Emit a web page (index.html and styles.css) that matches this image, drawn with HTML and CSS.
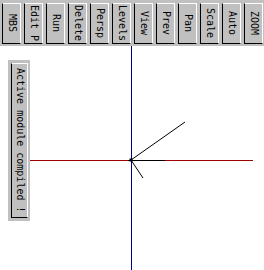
FILE: index.html
```html
<!DOCTYPE html>
<html>
<head>
<meta charset="utf-8">
<link rel="stylesheet" href="styles.css">
</head>
<body>
<div class="app">
  <div class="toolbar">
    <div class="btn"><span class="lbl">MBS</span></div>
    <div class="btn"><span class="lbl">Edit P</span></div>
    <div class="btn"><span class="lbl">Run</span></div>
    <div class="btn"><span class="lbl">Delete</span></div>
    <div class="btn"><span class="lbl">Persp</span></div>
    <div class="btn"><span class="lbl">Levels</span></div>
    <div class="btn"><span class="lbl">View</span></div>
    <div class="btn"><span class="lbl">Prev</span></div>
    <div class="btn"><span class="lbl">Pan</span></div>
    <div class="btn"><span class="lbl">Scale</span></div>
    <div class="btn"><span class="lbl">Auto</span></div>
    <div class="btn"><span class="lbl">ZOOM</span></div>
  </div>
  <div class="canvas">
    <svg class="plot" width="264" height="224" viewBox="0 0 264 224">
      <line class="axis-x" x1="30" y1="114.5" x2="253" y2="114.5"/>
      <line class="axis-y" x1="131.5" y1="0" x2="131.5" y2="224"/>
      <line class="vec crisp" x1="128" y1="114.5" x2="165" y2="114.5"/>
      <line class="vec" x1="131" y1="114" x2="185" y2="76"/>
      <line class="vec" x1="131" y1="114" x2="143" y2="132"/>
      <rect class="dot" x="129.5" y="112.5" width="3" height="3"/>
    </svg>
    <div class="status"><div class="status-in"><span class="lbl">Active module compiled !</span></div></div>
  </div>
</div>
</body>
</html>
```
FILE: styles.css
```css
html, body {
  margin: 0;
  padding: 0;
  background: #ffffff;
}
.app {
  width: 264px;
  height: 270px;
  font-family: "DejaVu Sans Mono", "Liberation Mono", monospace;
  font-size: 10px;
  color: #000;
}
.toolbar {
  display: flex;
  height: 46px;
  box-sizing: border-box;
  padding: 3px 0 0 2px;
  gap: 3px;
  background: #c0c0c0;
}
.btn {
  width: 19px;
  height: 41px;
  box-sizing: border-box;
  border-style: solid;
  border-width: 1px;
  border-color: #ffffff #ffffff #000000 #000000;
  background: #c0c0c0;
  display: flex;
  align-items: center;
  justify-content: center;
}
.lbl {
  writing-mode: vertical-rl;
  white-space: nowrap;
  line-height: 12px;
}
.canvas {
  position: relative;
  height: 224px;
  box-sizing: border-box;
  padding: 14px 0 0 8px;
  background: #ffffff;
}
.plot {
  position: absolute;
  left: 0;
  top: 0;
}
.axis-x {
  stroke: #a00000;
  stroke-width: 1;
  shape-rendering: crispEdges;
}
.axis-y {
  stroke: #000080;
  stroke-width: 1;
  shape-rendering: crispEdges;
}
.vec {
  stroke: #000;
  stroke-width: 1;
}
.crisp {
  shape-rendering: crispEdges;
}
.dot {
  fill: #000;
}
.status {
  position: relative;
  width: 22px;
  height: 161px;
  box-sizing: border-box;
  padding: 3px 2px 3px 3px;
  background: #c0c0c0;
}
.status-in {
  height: 100%;
  box-sizing: border-box;
  border-style: solid;
  border-width: 1px;
  border-color: #ffffff #ffffff #000000 #000000;
  display: flex;
  align-items: center;
  justify-content: center;
}
```
